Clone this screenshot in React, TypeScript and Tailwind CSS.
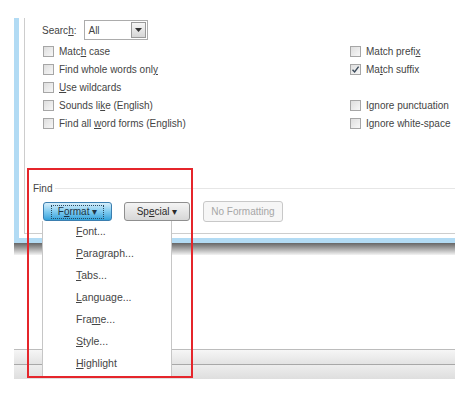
import type { ReactNode } from 'react';

const font = { fontFamily: '"Liberation Sans", Arial, sans-serif' };

function Box({ checked }: { checked?: boolean }) {
  return (
    <span className="relative flex h-[11px] w-[11px] shrink-0 items-center justify-center border border-[#a6a6a6] bg-gradient-to-br from-[#dedede] to-[#f7f7f7]">
      {checked && (
        <svg width="9" height="9" viewBox="0 0 9 9" className="absolute">
          <path d="M1.5 4.8 L3.6 7 L7.6 1.6" fill="none" stroke="#3a4a5a" strokeWidth="1.4" />
        </svg>
      )}
    </span>
  );
}

function Check({ children, checked }: { children: ReactNode; checked?: boolean }) {
  return (
    <div className="flex h-[18px] items-center gap-[5px] whitespace-nowrap">
      <Box checked={checked} />
      <span>{children}</span>
    </div>
  );
}

const menuItems: [string, string, string][] = [
  ['', 'F', 'ont...'],
  ['', 'P', 'aragraph...'],
  ['', 'T', 'abs...'],
  ['', 'L', 'anguage...'],
  ['Fra', 'm', 'e...'],
  ['', 'S', 'tyle...'],
  ['', 'H', 'ighlight'],
];

export default function App() {
  return (
    <div style={font} className="relative h-[394px] w-[474px] overflow-hidden bg-white text-[10px] text-[#444]">
      {/* dialog */}
      <div className="pl-[14px] pt-[18px]">
        <div className="h-[225px] w-[441px] border-b-[5px] border-l-[5px] border-[#b2dbf4] pb-[4px] pl-[5px]">
          <div className="flex h-full flex-col border-b border-l border-[#cdcdcd] pl-[17px] pt-[2px]">
            <div className="flex h-[20px] items-center gap-[8px]">
              <span>
                Searc<u>h</u>:
              </span>
              <div className="flex h-[20px] w-[64px] items-center justify-between border border-[#acacac] bg-white pl-[3px] pr-[1px]">
                <span>All</span>
                <span className="flex h-[16px] w-[15px] items-center justify-center border border-[#9a9a9a] bg-gradient-to-b from-[#f6f6f6] to-[#d6d6d6]">
                  <svg width="7" height="4" viewBox="0 0 7 4">
                    <path d="M0 0 H7 L3.5 4 Z" fill="#333" />
                  </svg>
                </span>
              </div>
            </div>

            <div className="ml-[1px] mt-[2px] grid grid-cols-[307px_1fr]">
              <div className="flex flex-col">
                <Check>
                  Matc<u>h</u> case
                </Check>
                <Check>
                  Find whole words onl<u>y</u>
                </Check>
                <Check>
                  <u>U</u>se wildcards
                </Check>
                <Check>
                  Sounds li<u>k</u>e (English)
                </Check>
                <Check>
                  Find all <u>w</u>ord forms (English)
                </Check>
              </div>
              <div className="flex flex-col">
                <Check>
                  Match prefi<u>x</u>
                </Check>
                <Check checked>
                  Ma<u>t</u>ch suffix
                </Check>
                <div className="h-[18px]" />
                <Check>Ignore punctuation</Check>
                <Check>Ignore white-space</Check>
              </div>
            </div>

            <div className="-ml-[9px] mt-[49px] flex h-[14px] items-center gap-[3px]">
              <span>Find</span>
              <div className="h-px flex-1 bg-[#e6e6e6]" />
            </div>

            <div className="ml-[1px] mt-[6px] flex items-center">
              <div className="flex h-[19px] w-[69px] items-center justify-center rounded-[3px] border border-[#3b7eaf] bg-gradient-to-b from-[#d6eefa] via-[#7fcbf0] to-[#2fa2db] text-[#1d3445]">
                <span className="border border-dotted border-[#2a4a60] px-[6px] leading-[12px]">
                  F<u>o</u>rmat ▾
                </span>
              </div>
              <div className="ml-[12px] flex h-[19px] w-[66px] items-center justify-center rounded-[3px] border border-[#8f8f8f] bg-gradient-to-b from-[#f4f4f4] to-[#d7d7d7] text-[#2a2a2a]">
                Sp<u>e</u>cial ▾
              </div>
              <div className="ml-[13px] flex h-[21px] w-[80px] items-center justify-center rounded-[3px] border border-[#c8c8c8] bg-[#f6f6f6] text-[#a6a6a6]">
                No Formatting
              </div>
            </div>
          </div>
        </div>
        <div className="h-[12px] w-[441px] bg-gradient-to-b from-[#666] via-[#ababab] to-[#f4f4f4]" />
      </div>

      {/* window behind */}
      <div className="ml-[14px] mt-[94px] flex h-[30px] w-[441px] flex-col border-t border-[#bcbcbc]">
        <div className="h-[14px] bg-gradient-to-b from-[#f6f6f6] to-[#e3e3e3]" />
        <div className="h-px bg-[#a8a8a8]" />
        <div className="flex-1 bg-gradient-to-b from-[#eeeeee] to-[#dedede]" />
      </div>

      {/* dropdown menu */}
      <div className="absolute left-[42px] top-[221px] flex h-[155px] w-[130px] flex-col border-x border-[#c6c6c6] bg-white pl-[33px] text-[10.5px] text-[#454545]">
        {menuItems.map(([a, u, b]) => (
          <div key={u + b} className="flex h-[22px] items-center">
            <span>
              {a}
              <u>{u}</u>
              {b}
            </span>
          </div>
        ))}
      </div>

      {/* annotation */}
      <div className="pointer-events-none absolute left-[27px] top-[168px] h-[210px] w-[166px] border-2 border-[#e5252b]" />
    </div>
  );
}
